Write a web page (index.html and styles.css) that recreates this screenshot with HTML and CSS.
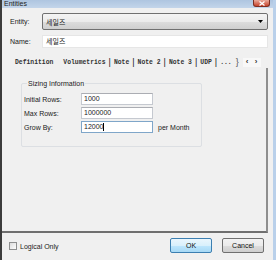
FILE: index.html
```html
<!DOCTYPE html>
<html>
<head>
    <meta charset="utf-8">
    <link rel="stylesheet" href="styles.css">
</head>
<body>
    <div class="window">
        <div class="titlebar">
            <span class="title">Entities</span>
            <span class="close">
                <svg width="8" height="5" viewBox="0 0 8 5"><path d="M1.5 0.5 L6.5 4.5 M6.5 0.5 L1.5 4.5" stroke="#fff" stroke-width="1.3"/></svg>
            </span>
        </div>

        <div class="content">
            <div class="row entity">
                <span class="label">Entity:</span>
                <div class="combo">
                    <span>세일즈</span>
                    <svg class="arrow" width="5" height="3" viewBox="0 0 5 3"><path d="M0 0 H5 L2.5 3 Z" fill="#000"/></svg>
                </div>
            </div>

            <div class="row name">
                <span class="label">Name:</span>
                <div class="field">세일즈</div>
            </div>

            <div class="tabs">
                <span class="tab">Definition</span>
                <span class="tab">Volumetrics</span>
                <span class="sep">|</span>
                <span class="tab">Note</span>
                <span class="sep">|</span>
                <span class="tab">Note 2</span>
                <span class="sep">|</span>
                <span class="tab">Note 3</span>
                <span class="sep">|</span>
                <span class="tab">UDP</span>
                <span class="sep">|</span>
                <span class="tab">...</span>
                <span class="brace">}</span>
                <span class="spin"><span>&lsaquo;</span><span>&rsaquo;</span></span>
            </div>

            <div class="panel">
                <div class="group">
                    <span class="legend">Sizing Information</span>
                    <div class="grid">
                        <span class="label">Initial Rows:</span>
                        <div class="input">1000</div>
                        <span></span>

                        <span class="label">Max Rows:</span>
                        <div class="input">1000000</div>
                        <span></span>

                        <span class="label">Grow By:</span>
                        <div class="input focus">12000<i class="caret"></i></div>
                        <span class="label">per Month</span>
                    </div>
                </div>
            </div>

            <div class="footer">
                <label class="check"><span class="box"></span>Logical Only</label>
                <div class="buttons">
                    <button class="btn default">OK</button>
                    <button class="btn">Cancel</button>
                </div>
            </div>
        </div>
    </div>
</body>
</html>
```

FILE: styles.css
```css
body {
    margin: 0;
    padding: 0;
    font-family: "Liberation Sans", Arial, "Noto Sans CJK KR", sans-serif;
    font-size: 7px;
    color: #1a1a1a;
}
.window {
    width: 276px;
    height: 260px;
    box-sizing: border-box;
    background: #f0f0f0;
    border-left: 2px solid #3c3c3c;
    border-right: 3px solid #b9d0ea;
    display: flex;
    flex-direction: column;
    overflow: hidden;
}
.titlebar {
    height: 8px;
    background: linear-gradient(#aec5e0, #c3d5ea);
    display: flex;
    justify-content: space-between;
    align-items: flex-start;
    margin-left: -2px;
    margin-right: -3px;
}
.title {
    font-size: 7px;
    line-height: 7px;
    padding-left: 4px;
    color: #222;
}
.close {
    width: 17px;
    height: 7px;
    margin-right: 6px;
    background: linear-gradient(#e9a99b, #c7432b);
    border: 1px solid #7d2e22;
    border-top: none;
    border-radius: 0 0 3px 3px;
    box-sizing: border-box;
    display: flex;
    justify-content: center;
    align-items: center;
}
.content {
    flex: 1;
    display: flex;
    flex-direction: column;
    padding-right: 5px;
}
.row {
    display: flex;
    align-items: center;
    padding-left: 8px;
}
.row .label {
    width: 32px;
}
.entity {
    margin-top: 5px;
    height: 17px;
}
.combo {
    flex: 1;
    height: 17px;
    box-sizing: border-box;
    border: 1px solid #707070;
    border-radius: 2px;
    background: linear-gradient(#f4f4f4 0%, #ebebeb 50%, #dddddd 51%, #cfcfcf 100%);
    display: flex;
    align-items: center;
    justify-content: space-between;
    padding: 0 4px 0 3px;
    font-size: 7px;
}
.name {
    margin-top: 5px;
    height: 13px;
}
.field {
    flex: 1;
    height: 13px;
    box-sizing: border-box;
    border: 1px solid #e6e6e6;
    background: #fff;
    padding-left: 3px;
    line-height: 11px;
}
.tabs {
    margin-top: 8px;
    height: 12px;
    display: flex;
    align-items: center;
    padding-left: 13px;
    font-family: "Liberation Mono", "Courier New", monospace;
    font-weight: bold;
    font-size: 6.4px;
    color: #333;
}
.tab {
    margin-right: 3px;
}
.tab:first-child {
    margin-right: 10px;
}
.sep {
    margin-right: 3px;
    font-family: "Liberation Sans", sans-serif;
    font-weight: normal;
    font-size: 9px;
    color: #222;
}
.brace {
    font-family: "Liberation Sans", sans-serif;
    font-weight: normal;
    font-size: 9px;
    color: #555;
    margin-left: 1px;
}
.spin {
    margin-left: 4px;
    width: 18px;
    height: 9px;
    background: #f8f8f8;
    display: flex;
    justify-content: space-around;
    align-items: center;
    font-family: "Liberation Sans", sans-serif;
    font-size: 8px;
    line-height: 8px;
}
.panel {
    height: 165px;
    box-sizing: border-box;
    margin-left: -2px;
    border-right: 2px solid #8e8e8e;
    border-bottom: 2px solid #6f6f6f;
    padding: 15px 0 0 21px;
}
.group {
    position: relative;
    width: 181px;
    height: 64px;
    box-sizing: border-box;
    border: 1px solid #dcdfe3;
    border-radius: 2px;
    padding: 9px 0 0 2px;
}
.legend {
    position: absolute;
    top: -5px;
    left: 5px;
    padding: 0 1px;
    background: #f0f0f0;
    line-height: 9px;
}
.grid {
    display: grid;
    grid-template-columns: 57px 72px auto;
    grid-auto-rows: 12px;
    row-gap: 2px;
    align-items: center;
}
.grid > span:last-child {
    padding-left: 5px;
}
.input {
    height: 12px;
    box-sizing: border-box;
    border: 1px solid #c5c9d0;
    border-top-color: #abadb3;
    background: #fff;
    padding-left: 2px;
    line-height: 10px;
    display: flex;
    align-items: center;
}
.input.focus {
    border-color: #7fa6c9;
}
.caret {
    width: 1px;
    height: 8px;
    background: #000;
}
.footer {
    flex: 1;
    display: flex;
    justify-content: space-between;
    align-items: flex-start;
    padding: 5px 4px 0 7px;
}
.check {
    display: flex;
    align-items: center;
    margin-top: 4px;
}
.box {
    width: 8px;
    height: 8px;
    box-sizing: border-box;
    border: 1px solid #8e8f8f;
    background: linear-gradient(135deg, #dcdcdc, #fdfdfd);
    margin-right: 3px;
}
.buttons {
    display: flex;
    gap: 10px;
}
.btn {
    width: 42px;
    height: 15px;
    box-sizing: border-box;
    border: 1px solid #707070;
    border-radius: 2px;
    background: linear-gradient(#f2f2f2 0%, #ebebeb 50%, #dddddd 51%, #cfcfcf 100%);
    font-family: "Liberation Sans", Arial, sans-serif;
    font-size: 7px;
    color: #111;
    padding: 0;
}
.btn.default {
    border-color: #3c7fb1;
    background: linear-gradient(#eaf6fd 0%, #d9f0fc 50%, #bee6fd 51%, #a7d9f5 100%);
}
```
